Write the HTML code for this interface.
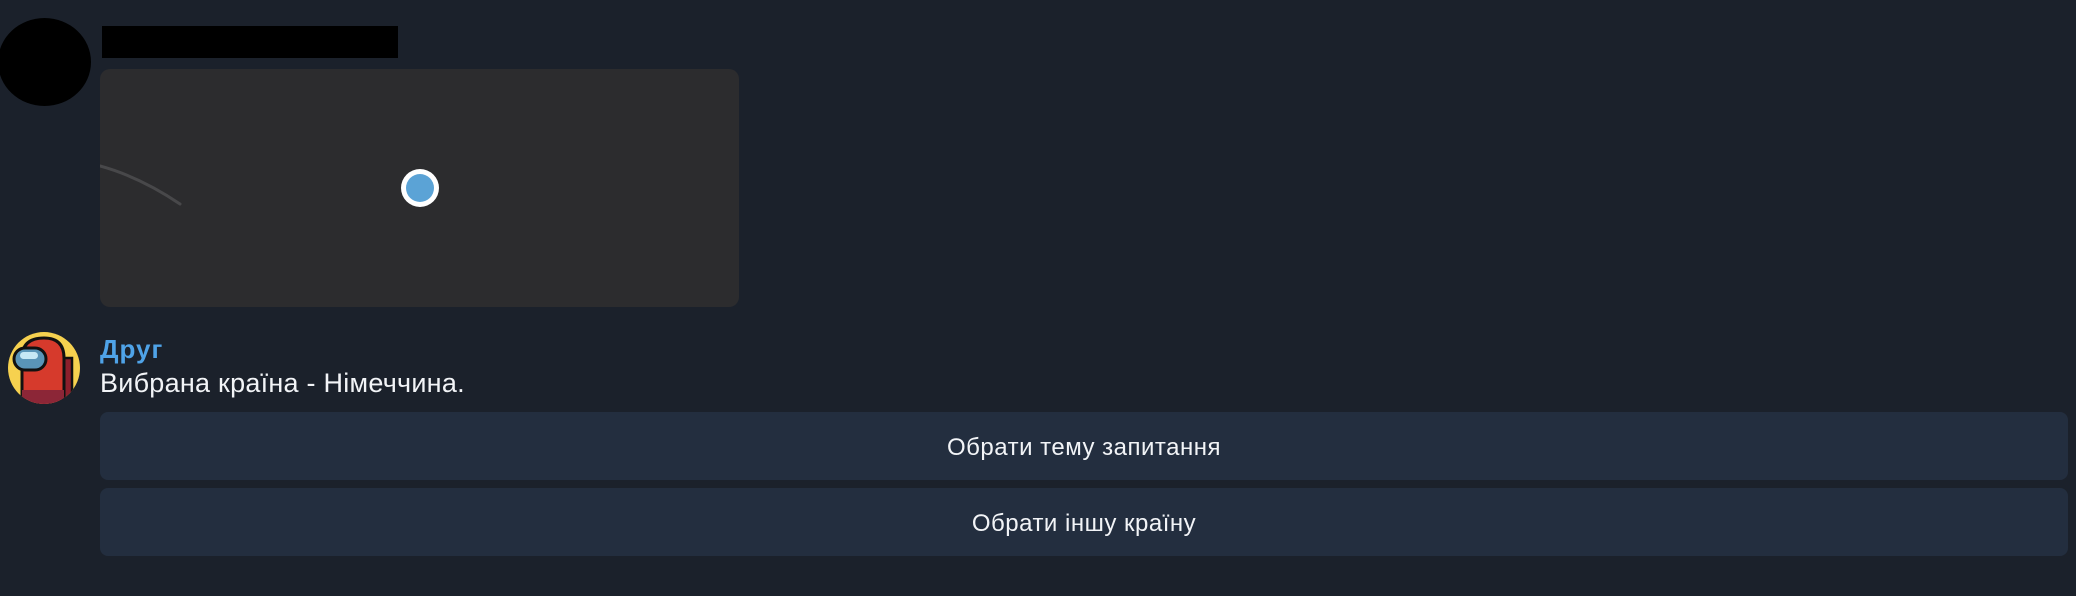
<!DOCTYPE html>
<html><head><meta charset="utf-8"><style>
body{margin:0;width:2076px;height:596px;background:#1b212b;position:relative;overflow:hidden;font-family:"Liberation Sans","DejaVu Sans",sans-serif}
.a{position:absolute}
.btn{position:absolute;left:100px;width:1968px;height:68px;background:#232e3f;border-radius:8px;color:#f2f4f7;font-size:24px;letter-spacing:0.5px;text-align:center;line-height:72px}
</style></head><body>
<div class="a" style="left:-2px;top:18px;width:93px;height:88px;border-radius:50%;background:#000"></div>
<div class="a" style="left:102px;top:26px;width:296px;height:32px;background:#000"></div>
<div class="a" style="left:100px;top:69px;width:639px;height:238px;background:#2c2c2e;border-radius:10px;overflow:hidden">
<svg width="639" height="238" style="position:absolute;left:0;top:0"><path d="M0 97 Q40 108 80 135" stroke="#48484a" stroke-width="3" fill="none" stroke-linecap="round"/>
<circle cx="320" cy="119" r="19" fill="#fff"/><circle cx="320" cy="119" r="14" fill="#5ba3d6"/></svg>
</div>
<svg class="a" style="left:8px;top:332px" width="72" height="72" viewBox="0 0 72 72">
<defs><clipPath id="c"><circle cx="36" cy="36" r="36"/></clipPath></defs>
<circle cx="36" cy="36" r="36" fill="#f6d14f"/>
<g clip-path="url(#c)">
<path d="M54 26 h10 v52 h-10z" fill="#8c1f2c" stroke="#111" stroke-width="2.5"/>
<path d="M14 78 V26 Q14 6 36 6 Q56 6 56 26 V78z" fill="#d63a2c" stroke="#111" stroke-width="3"/>
<path d="M14 58 h42 v20 h-42z" fill="#8c2637"/>
<rect x="6" y="16" width="32" height="22" rx="11" fill="#5a95b8" stroke="#111" stroke-width="3"/>
<rect x="12" y="20" width="18" height="7" rx="3.5" fill="#c6e8f5"/>
</g></svg>
<div class="a" style="left:100px;top:334px;font-size:26px;letter-spacing:1px;font-weight:bold;color:#4fa3e8">Друг</div>
<div class="a" style="left:100px;top:368px;font-size:27px;letter-spacing:0.25px;color:#f2f4f7">Вибрана країна - Німеччина.</div>
<div class="btn" style="top:412px">Обрати тему запитання</div>
<div class="btn" style="top:488px">Обрати іншу країну</div>
</body></html>
